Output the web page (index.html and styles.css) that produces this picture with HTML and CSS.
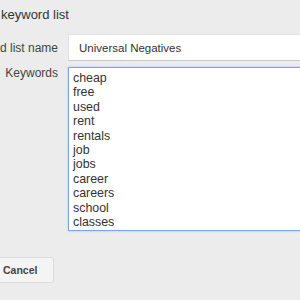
FILE: index.html
```html
<!DOCTYPE html>
<html lang="en">
<head>
  <meta charset="UTF-8">
  <title>Edit keyword list</title>
  <link rel="stylesheet" href="styles.css">
</head>
<body>

<!-- EDIT DIALOG -->
<div class="dialog">
  <h2 class="title">Edit keyword list</h2>

  <div class="row">
    <label class="label" for="listName">Keyword list name</label>
    <input class="field" id="listName" type="text" value="Universal Negatives">
  </div>

  <div class="row">
    <label class="label label-top" for="keywords">Keywords</label>
    <textarea class="keywords" id="keywords">cheap
free
used
rent
rentals
job
jobs
career
careers
school
classes</textarea>
  </div>

  <div class="actions">
    <button class="btn">Cancel</button>
  </div>
</div>

</body>
</html>
```

FILE: styles.css
```css
* { margin: 0; padding: 0; box-sizing: border-box; }
body {
  font-family: "Liberation Sans", Arial, sans-serif;
  background-color: #ececec;
  color: #333;
  overflow: hidden;
  width: 300px;
  height: 300px;
}

.dialog {
  margin-left: -40px;
  width: 420px;
}

.title {
  font-size: 13px;
  font-weight: normal;
  line-height: 16px;
  color: #333;
  padding: 7px 0 0 15px;
  margin-bottom: 11px;
  white-space: nowrap;
}

.row {
  display: flex;
  align-items: center;
  gap: 10px;
  margin-bottom: 6px;
}

.label {
  width: 98px;
  flex-shrink: 0;
  display: flex;
  justify-content: flex-end;
  white-space: nowrap;
  font-size: 12px;
  color: #444;
}

.label-top {
  align-self: flex-start;
  line-height: 13px;
}

.field {
  flex: 1;
  height: 27px;
  border: 1px solid #e2e2e2;
  border-bottom-color: #c8c8c8;
  background: #fff;
  padding: 0 10px;
  font-family: "Liberation Sans", Arial, sans-serif;
  font-size: 11.5px;
  color: #333;
  outline: none;
}

.keywords {
  flex: 1;
  height: 164px;
  border: 1px solid #7ea3f2;
  box-shadow: 0 0 2px #a9c1f7;
  background: #fff;
  padding: 3px 4px;
  font-family: "Liberation Sans", Arial, sans-serif;
  font-size: 12.4px;
  line-height: 14.4px;
  color: #333;
  resize: none;
  outline: none;
  overflow: hidden;
}

.actions {
  display: flex;
  margin-top: 26px;
  padding-left: 26px;
}

.btn {
  height: 26px;
  padding: 0 16px;
  font-family: "Liberation Sans", Arial, sans-serif;
  font-size: 10.5px;
  font-weight: bold;
  color: #444;
  background: #f4f4f4;
  border: 1px solid #dcdcdc;
  border-radius: 2px;
}
```
